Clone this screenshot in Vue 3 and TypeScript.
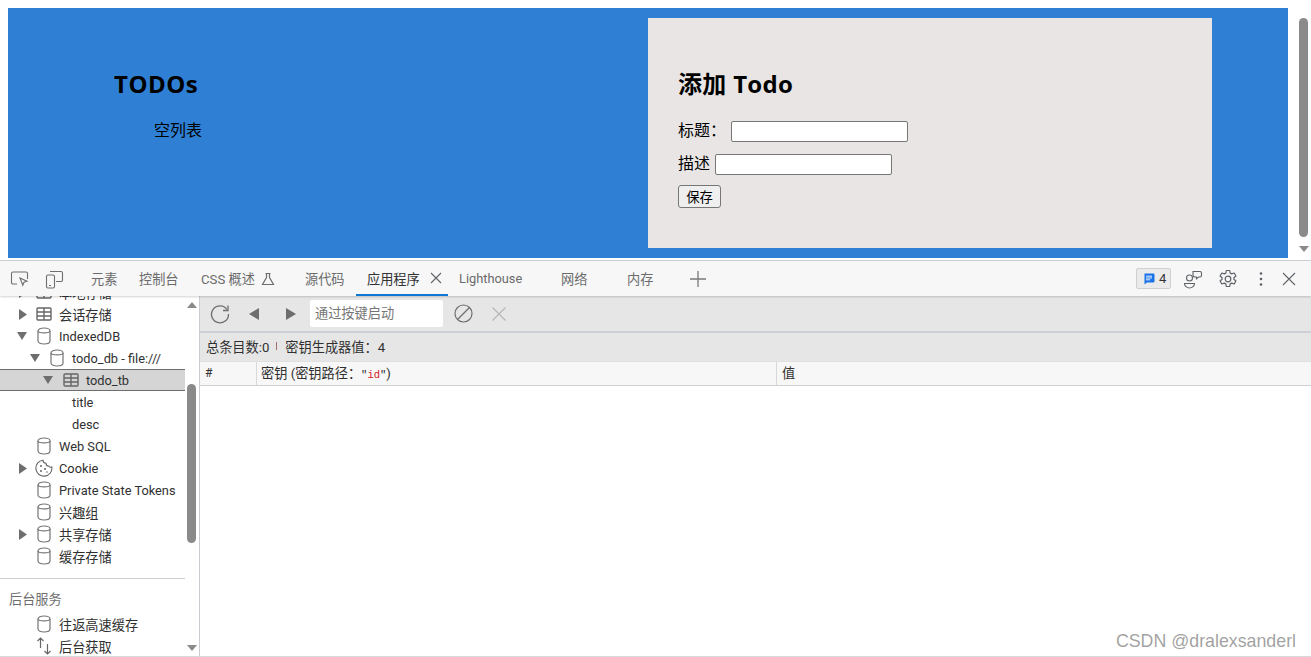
<script setup lang="ts">
interface Row {
  label: string
  level: 0 | 1 | 2 | 3
  arrow?: 'right' | 'down'
  icon?: 'db' | 'table' | 'cookie' | 'updown'
  selected?: boolean
}
const rows: Row[] = [
  { label: '本地存储', level: 0, arrow: 'right', icon: 'table' },
  { label: '会话存储', level: 0, arrow: 'right', icon: 'table' },
  { label: 'IndexedDB', level: 0, arrow: 'down', icon: 'db' },
  { label: 'todo_db - file:///', level: 1, arrow: 'down', icon: 'db' },
  { label: 'todo_tb', level: 2, arrow: 'down', icon: 'table', selected: true },
  { label: 'title', level: 3 },
  { label: 'desc', level: 3 },
  { label: 'Web SQL', level: 0, icon: 'db' },
  { label: 'Cookie', level: 0, arrow: 'right', icon: 'cookie' },
  { label: 'Private State Tokens', level: 0, icon: 'db' },
  { label: '兴趣组', level: 0, icon: 'db' },
  { label: '共享存储', level: 0, arrow: 'right', icon: 'db' },
  { label: '缓存存储', level: 0, icon: 'db' }
]
const bgRows: Row[] = [
  { label: '往返高速缓存', level: 0, icon: 'db' },
  { label: '后台获取', level: 0, icon: 'updown' }
]
const groups: { rows: Row[]; cls: string }[] = [
  { rows, cls: 'tree-top' },
  { rows: bgRows, cls: 'tree-bottom' }
]
const tabs: { label: string; cls?: string }[] = [
  { label: '元素' },
  { label: '控制台' }
]
const isLatin = (s: string): boolean => /^[\x00-\x7f]+$/.test(s)
</script>

<template>
  <div class="root">
    <section class="page">
      <main class="blue">
        <div class="list-col">
          <h1>TODOs</h1>
          <p class="empty">空列表</p>
        </div>
        <form class="panel" @submit.prevent>
          <h2>添加 Todo</h2>
          <div class="field"><label>标题：</label><input class="in-a" type="text" /></div>
          <div class="field f2"><label>描述</label><input class="in-b" type="text" /></div>
          <button class="save" type="button">保存</button>
        </form>
      </main>
      <div class="page-scroll">
        <div class="page-thumb"></div>
        <svg class="page-arrow" width="10" height="6" viewBox="0 0 10 6"><path d="M0 0h10L5 6z" fill="#8a8a8a" /></svg>
      </div>
    </section>

    <section class="devtools">
      <header class="tabbar">
        <div class="tb-left">
          <svg width="20" height="18" viewBox="0 0 20 18" fill="none" stroke="#6e6e6e" stroke-width="1.1">
            <path d="M7 14H3a1.5 1.5 0 0 1-1.5-1.5v-9A1.5 1.5 0 0 1 3 2h13a1.5 1.5 0 0 1 1.5 1.5V9" />
            <path d="M10 8l7 3.2-3 1.1-1.2 3z" />
          </svg>
          <svg width="20" height="20" viewBox="0 0 20 20" fill="none" stroke="#6e6e6e" stroke-width="1.1">
            <rect x="1.5" y="6" width="8" height="13" rx="1.5" />
            <path d="M5 2.5h11A1.5 1.5 0 0 1 17.500 4v7a1.500 1.500 0 0 1-1.500 1.500h-5" />
            <path d="M4 16.500h2" />
          </svg>
        </div>
        <nav class="tabs">
          <span v-for="t in tabs" :key="t.label" class="tab">{{ t.label }}</span>
          <span class="tab tab-css">CSS 概述
            <svg width="14" height="14" viewBox="0 0 14 14" fill="none" stroke="#6e6e6e" stroke-width="1.2"><path d="M4.500 1.500h5M5.500 1.500v4L1.500 12.500h11L8.500 5.500v-4" /></svg>
          </span>
          <span class="tab">源代码</span>
          <span class="tab active">应用程序
            <svg class="tab-x" width="12" height="12" viewBox="0 0 12 12" stroke="#5f6368" stroke-width="1.1"><path d="M1 1l10 10M11 1L1 11" /></svg>
          </span>
          <span class="tab tab-lh">Lighthouse</span>
          <span class="tab tab-net">网络</span>
          <span class="tab tab-mem">内存</span>
          <svg class="plus" width="16" height="16" viewBox="0 0 16 16" stroke="#7a7a7a" stroke-width="1.3"><path d="M8 0v16M0 8h16" /></svg>
        </nav>
        <div class="tb-right">
          <span class="badge">
            <svg width="12" height="12" viewBox="0 0 12 12"><path d="M1.500 0.500h9a1 1 0 0 1 1 1v7a1 1 0 0 1-1 1H4L1.500 11.500z" fill="#1a73e8" /><path d="M3 3.200h6M3 5h6M3 6.800h4" stroke="#fff" stroke-width="0.9" /></svg>
            <span class="badge-n">4</span>
          </span>
          <svg class="i-feedback" width="20" height="20" viewBox="0 0 20 20" fill="none" stroke="#5f6368" stroke-width="1.1">
            <circle cx="6.500" cy="9" r="3" />
            <path d="M1.500 14.500h10a5 4.500 0 0 1-10 0z" />
            <path d="M10 2.500h7a1.500 1.500 0 0 1 1.500 1.500v2.500A1.500 1.500 0 0 1 17 8h-1.500l-2 1.800V8H12a2 2 0 0 1-2-2z" />
          </svg>
          <svg class="i-gear" width="20" height="20" viewBox="0 0 20 20" fill="none" stroke="#5f6368" stroke-width="1.2">
            <circle cx="10" cy="10" r="2.800" />
            <path d="M8.300 1.500h3.400l.5 2.600 1.500.8 2.500-.9 1.700 3-2 1.700v1.600l2 1.700-1.700 3-2.500-.9-1.500.8-.5 2.600H8.300l-.5-2.600-1.500-.8-2.500.9-1.700-3 2-1.700V8.700l-2-1.700 1.700-3 2.500.9 1.500-.8z" stroke-linejoin="round" />
          </svg>
          <svg class="i-dots" width="4" height="16" viewBox="0 0 4 16" fill="#5f6368"><circle cx="2" cy="2.500" r="1.300" /><circle cx="2" cy="8" r="1.300" /><circle cx="2" cy="13.500" r="1.300" /></svg>
          <svg class="i-close" width="14" height="14" viewBox="0 0 14 14" stroke="#5f6368" stroke-width="1.1"><path d="M1 1l12 12M13 1L1 13" /></svg>
        </div>
      </header>

      <div class="body">
        <aside class="side">
          <div class="tree">
            <template v-for="g in groups" :key="g.cls">
              <div v-if="g.cls === 'tree-bottom'" class="side-sep"></div>
              <div v-if="g.cls === 'tree-bottom'" class="side-head">后台服务</div>
              <div :class="g.cls">
                <div
                  v-for="r in g.rows"
                  :key="r.label"
                  class="row"
                  :class="['lv' + r.level, { selected: r.selected }]"
                >
                  <span v-if="r.level !== 3" class="arrow">
                    <svg v-if="r.arrow === 'right'" width="8" height="11" viewBox="0 0 8 11"><path d="M0 0l8 5.500L0 11z" fill="#6e6e6e" /></svg>
                    <svg v-else-if="r.arrow === 'down'" class="arrow-down" width="10" height="8" viewBox="0 0 10 8"><path d="M0 0h10L5 8z" fill="#6e6e6e" /></svg>
                  </span>
                  <span v-if="r.icon" class="ico">
                    <svg v-if="r.icon === 'db'" width="14" height="18" viewBox="0 0 14 18" fill="none" stroke="#757575" stroke-width="1.2">
                      <path d="M1 4c0-4 12-4 12 0v10c0 4-12 4-12 0z" />
                      <path d="M1 4c0 2.500 12 2.500 12 0" />
                    </svg>
                    <svg v-else-if="r.icon === 'table'" width="16" height="14" viewBox="0 0 16 14" fill="none" stroke="#666" stroke-width="1.400">
                      <rect x="1" y="1" width="14" height="12" rx="1" />
                      <path d="M1 5h14M1 9h14M8 1v12" />
                    </svg>
                    <svg v-else-if="r.icon === 'cookie'" width="18" height="18" viewBox="0 0 18 18" fill="none" stroke="#666" stroke-width="1.100">
                      <path d="M8 1.200a3 3 0 0 0 3 3 3 3 0 0 0 3 3 2 2 0 0 0 2.800.8A8 8 0 1 1 8 1.200z" />
                      <circle cx="6" cy="7" r="1" fill="#666" stroke="none" /><circle cx="10" cy="10" r="1" fill="#666" stroke="none" /><circle cx="6" cy="12" r="1" fill="#666" stroke="none" /><circle cx="12" cy="13" r=".8" fill="#666" stroke="none" />
                    </svg>
                    <svg v-else width="16" height="18" viewBox="0 0 16 18" fill="none" stroke="#666" stroke-width="1.200">
                      <path d="M4.500 11V1M1.500 4l3-3 3 3M11.500 7v10M8.500 14l3 3 3-3" />
                    </svg>
                  </span>
                  <span class="label" :class="{ latin: isLatin(r.label) }">{{ r.label }}</span>
                </div>
              </div>
            </template>
          </div>
          <div class="side-scroll">
            <svg width="10" height="6" viewBox="0 0 10 6"><path d="M0 6h10L5 0z" fill="#8a8a8a" /></svg>
            <div class="side-thumb"></div>
            <svg class="down" width="10" height="6" viewBox="0 0 10 6"><path d="M0 0h10L5 6z" fill="#8a8a8a" /></svg>
          </div>
        </aside>

        <div class="content">
          <div class="toolbar">
            <svg class="t-refresh" width="20" height="20" viewBox="0 0 20 20" fill="none" stroke="#6e6e6e" stroke-width="1.300">
              <path d="M17 5.500A8.500 8.500 0 1 0 18.500 10" />
              <path d="M18 1.500v5h-5" />
            </svg>
            <svg class="t-prev" width="10" height="12" viewBox="0 0 10 12"><path d="M10 0v12L0 6z" fill="#6e6e6e" /></svg>
            <svg class="t-next" width="10" height="12" viewBox="0 0 10 12"><path d="M0 0v12L10 6z" fill="#6e6e6e" /></svg>
            <div class="t-input">通过按键启动</div>
            <svg class="t-ban" width="19" height="19" viewBox="0 0 19 19" fill="none" stroke="#6e6e6e" stroke-width="1.200">
              <circle cx="9.500" cy="9.500" r="8.500" /><path d="M3.500 15.500l12-12" />
            </svg>
            <svg class="t-x" width="14" height="14" viewBox="0 0 14 14" stroke="#b5b5b5" stroke-width="1.100"><path d="M0.500 0.500l13 13M13.500 0.500l-13 13" /></svg>
          </div>
          <div class="status">
            <span>总条目数:0</span><i class="pipe"></i><span>密钥生成器值：4</span>
          </div>
          <div class="thead">
            <div class="c-num">#</div>
            <div class="c-key">密钥 (密钥路径：<span class="mono">"<b>id</b>"</span>)</div>
            <div class="c-val">值</div>
          </div>
          <div class="tbody"></div>
        </div>
      </div>
    </section>
    <div class="watermark">CSDN @dralexsanderl</div>
  </div>
</template>

<style>
html, body { margin: 0; overflow: hidden; background: #fff; }
</style>

<style scoped>
.root {
  width: 1311px;
  height: 657px;
  position: relative;
  overflow: hidden;
  display: flex;
  flex-direction: column;
  font-family: Roboto, "Noto Sans CJK SC", sans-serif;
  color: #000;
}
.page { height: 260px; flex: none; display: flex; box-sizing: border-box; padding: 8px 0 2px 8px; }
.blue { width: 1280px; height: 250px; background: #2f80d5; display: flex; flex: none; font-family: "Open Sans", "Noto Sans CJK SC", sans-serif; }
.list-col { width: 640px; padding-left: 106px; box-sizing: border-box; }
h1 { margin: 59px 0 0; font-size: 24px; line-height: 33px; font-weight: 700; letter-spacing: .5px; }
.empty { margin: 19px 0 0 40px; font-size: 16px; line-height: 22px; }
.panel { width: 564px; height: 230px; margin-top: 10px; background: #e9e5e4; padding: 49px 30px 0; box-sizing: border-box; }
h2 { margin: 0 0 21px; font-size: 24px; line-height: 33px; font-weight: 700; letter-spacing: .3px; }
.field { display: flex; align-items: center; height: 21px; margin-bottom: 12px; font-size: 16px; }
.field label { margin-bottom: 4px; line-height: 22px; }
.f2 { margin-bottom: 10px; }
input {
  height: 21px; width: 177px; box-sizing: border-box; border: 1px solid #767676; border-radius: 2px;
  background: #fff; padding: 0; margin: 0; display: block;
}
.in-a { margin-left: 5px; }
.in-b { margin-left: 5px; }
.save {
  display: block; width: 43px; height: 23px; padding: 0; margin: 0; box-sizing: border-box;
  border: 1px solid #767676; border-radius: 3px; background: #efefef;
  font: 13.3px "Noto Sans CJK SC", sans-serif; color: #000;
}
.page-scroll { width: 23px; box-sizing: border-box; padding-left: 8px; display: flex; flex-direction: column; align-items: center; }
.page-thumb { width: 9px; height: 219px; margin-top: 10px; background: #8a8a8a; border-radius: 5px; }
.page-arrow { margin-top: 9px; }

.devtools { flex: 1; display: flex; flex-direction: column; min-height: 0; color: #202124; font-size: 13.2px; border-top: 1px solid #cdd0d4; }
.tabbar { height: 35px; flex: none; background: #f7f7f7; display: flex; align-items: center; box-shadow: 0 1px 2px rgba(0,0,0,.18); position: relative; z-index: 2; }
.tb-left { width: 80px; display: flex; gap: 15px; padding-left: 10px; box-sizing: border-box; align-items: center; }
.tabs { display: flex; align-items: stretch; height: 35px; color: #6b6b6b; }
.tab { display: flex; align-items: center; padding: 0 0 0 11px; white-space: nowrap; box-sizing: border-box; gap: 6px; position: relative; width: 62px; }
.tab:first-child { width: 48px; }
.tab.tab-css { width: 104px; }
.tab.active { color: #333; width: 92px; }
.tab.active::after { content: ""; position: absolute; left: 0; right: 0; bottom: 0; height: 2px; background: #0f78d4; }
.tab-x { position: absolute; left: 74px; top: 11px; }
.tab.tab-lh { width: 102px; font-size: 12.8px; }
.tab.tab-net { width: 66px; }
.tab.tab-mem { width: 49px; }
.plus { align-self: center; margin-left: 25px; }
.tb-right { margin-left: auto; display: flex; align-items: center; height: 100%; }
.badge { display: flex; align-items: center; gap: 4px; width: 35px; height: 21px; box-sizing: border-box; padding-left: 6px; background: #ebebeb; border: 1px solid #d0d0d0; border-radius: 2px; margin-right: 12px; color: #333; }
.badge-n { font-size: 13px; }
.i-feedback { margin-right: 15px; }
.i-gear { margin-right: 21px; }
.i-dots { margin-right: 19px; }
.i-close { margin-right: 15px; }

.body { flex: 1; display: flex; min-height: 0; border-bottom: 1px solid #d8d8d8; }
.side { width: 200px; flex: none; display: flex; box-sizing: border-box; border-right: 1px solid #c9cdd2; overflow: hidden; }
.tree { width: 185px; flex: none; margin-top: -15px; }
.row { height: 22px; display: flex; align-items: center; box-sizing: border-box; white-space: nowrap; color: #303030; }
.lv0 { padding-left: 15px; }
.lv1 { padding-left: 28px; }
.lv2 { padding-left: 41px; }
.lv3 { padding-left: 72px; }
.arrow { width: 15px; flex: none; display: flex; justify-content: center; }
.arrow-down { margin-left: -1px; }
.ico { width: 18px; margin: 0 6px 0 5px; flex: none; display: flex; justify-content: center; }
.lv2 .ico { margin-left: 6px; margin-right: 6px; }
.label.latin { font-size: 12.8px; padding-top: 1px; }
.selected { background: #d5d5d5; box-shadow: inset 0 1px 0 #6e6e6e, inset 0 -1px 0 #6e6e6e; }
.side-sep { height: 1px; background: #cdd0d4; margin-top: 11px; }
.side-head { margin-top: 10px; height: 22px; line-height: 22px; padding-left: 9px; color: #6e6e6e; }
.tree-bottom { margin-top: 2px; }
.side-scroll { width: 13px; display: flex; flex-direction: column; align-items: center; padding-top: 6px; box-sizing: border-box; }
.side-thumb { width: 9px; height: 159px; margin-top: 76px; border-radius: 5px; background: #8a8a8a; }
.down { margin-top: auto; margin-bottom: 5px; }

.content { flex: 1; display: flex; flex-direction: column; min-width: 0; }
.toolbar { height: 37px; box-sizing: border-box; background: #e6e6e6; border-bottom: 2px solid #cdd1d6; display: flex; align-items: center; padding-left: 10px; }
.t-prev { margin-left: 19px; }
.t-next { margin-left: 27px; }
.t-input { margin-left: 14px; width: 133px; height: 27px; line-height: 27px; background: #fff; border-radius: 2px; padding-left: 5px; box-sizing: border-box; color: #757575; }
.t-ban { margin-left: 11px; }
.t-x { margin-left: 19px; }
.status { height: 28px; background: #e6e6e6; display: flex; align-items: center; padding: 0 0 2px 6px; color: #303030; box-sizing: border-box; }
.pipe { width: 1px; height: 8px; background: #a0706a; margin: 0 8px 0 7px; }
.thead { height: 25px; display: flex; box-sizing: border-box; background: #f7f7f7; border-top: 1px solid #e0e0e0; border-bottom: 1px solid #cdd0d4; align-items: stretch; line-height: 23px; color: #303030; }
.thead > div { padding-left: 5px; box-sizing: border-box; white-space: nowrap; }
.c-num { width: 56px; font-size: 12px; }
.thead .c-key { width: 520px; border-left: 1px solid #d8d8d8; padding-left: 4px; }
.c-val { flex: 1; border-left: 1px solid #d8d8d8; }
.mono { font-family: "Liberation Mono", monospace; font-size: 10.5px; }
.mono b { font-weight: 400; color: #d32020; }
.tbody { flex: 1; background: #fff; }
.watermark {
  position: absolute; right: 15px; bottom: 5px; font: 17.8px "Liberation Sans", Arial, sans-serif; color: rgba(120,120,120,.7);
  white-space: nowrap;
}
</style>
